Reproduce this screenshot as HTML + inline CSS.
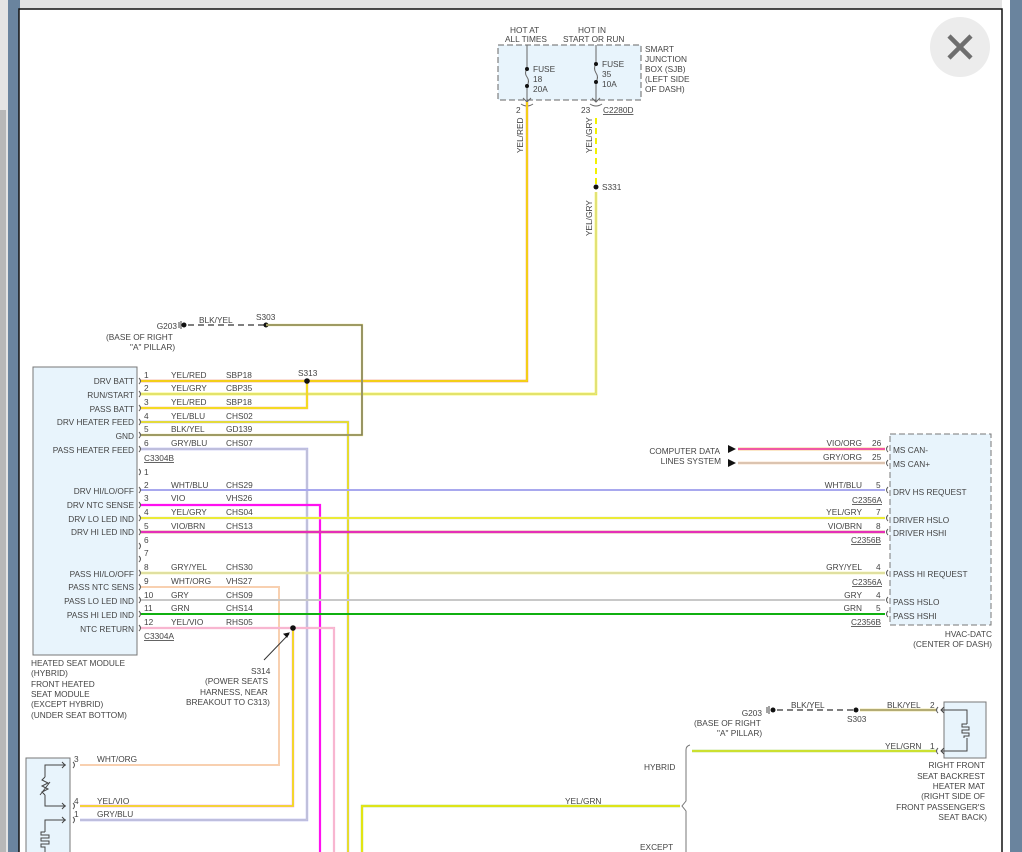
<!DOCTYPE html>
<html><head><meta charset="utf-8"><style>
html,body{margin:0;padding:0;width:1022px;height:852px;overflow:hidden;background:#fff}
svg{display:block}
text{font-family:"Liberation Sans",sans-serif;font-size:8.3px;fill:#444}
.r{text-anchor:end}
.u{text-decoration:underline}
</style></head><body>
<svg width="1022" height="852" viewBox="0 0 1022 852" xmlns="http://www.w3.org/2000/svg">
<rect x="0" y="0" width="1022" height="852" fill="#e4e4e4"/>
<rect x="0" y="110" width="6" height="742" fill="#b8b8b8"/>
<rect x="8" y="0" width="12" height="852" fill="#6a849e"/>
<rect x="1002" y="0" width="8" height="852" fill="#fff"/>
<rect x="1010" y="0" width="12" height="852" fill="#6a849e"/>
<rect x="19" y="9" width="983" height="850" fill="#fff" stroke="#111" stroke-width="1.5"/>
<circle cx="960" cy="47" r="30" fill="#ececec"/>
<path d="M949 36 L971 58 M971 36 L949 58" stroke="#6e6e6e" stroke-width="4.5"/>

<rect x="498" y="45" width="143" height="55" fill="#e8f4fc" stroke="#666" stroke-dasharray="6,3"/>
<text x="510" y="33">HOT AT</text><text x="505" y="42">ALL TIMES</text>
<text x="578" y="33">HOT IN</text><text x="563" y="42">START OR RUN</text>
<text x="645" y="52">SMART</text><text x="645" y="62">JUNCTION</text><text x="645" y="72">BOX (SJB)</text><text x="645" y="82">(LEFT SIDE</text><text x="645" y="92">OF DASH)</text>
<path d="M527 45V69 M527 86V102 M596 45V64 M596 82V102" stroke="#666"/>
<path d="M527 69q-3 4 0 8q3 4 0 9 M596 64q-3 4 0 9q3 4 0 9" stroke="#666" fill="none"/>
<circle cx="527" cy="69" r="2" fill="#111"/><circle cx="527" cy="86" r="2" fill="#111"/>
<circle cx="596" cy="64" r="2" fill="#111"/><circle cx="596" cy="82" r="2" fill="#111"/>
<text x="533" y="72">FUSE</text><text x="533" y="82">18</text><text x="533" y="92">20A</text>
<text x="602" y="67">FUSE</text><text x="602" y="77">35</text><text x="602" y="87">10A</text>
<path d="M523 98l4 4 4-4 M592 98l4 4 4-4 M521 104q6 4 12 0 M590 104q6 4 12 0" stroke="#666" fill="none"/>
<text x="516" y="113">2</text><text x="581" y="113">23</text><text x="603" y="113" class="u">C2280D</text>
<text transform="translate(523,153) rotate(-90)">YEL/RED</text>
<text transform="translate(592,153) rotate(-90)">YEL/GRY</text>
<text transform="translate(592,236) rotate(-90)">YEL/GRY</text>
<circle cx="596" cy="187" r="2.5" fill="#111"/><text x="602" y="190">S331</text>

<rect x="33" y="367" width="104" height="288" fill="#e8f4fc" stroke="#777"/>
<text class="r" x="134" y="384">DRV BATT</text>
<text class="r" x="134" y="398">RUN/START</text>
<text class="r" x="134" y="412">PASS BATT</text>
<text class="r" x="134" y="425">DRV HEATER FEED</text>
<text class="r" x="134" y="439">GND</text>
<text class="r" x="134" y="453">PASS HEATER FEED</text>
<text class="r" x="134" y="494">DRV HI/LO/OFF</text>
<text class="r" x="134" y="508">DRV NTC SENSE</text>
<text class="r" x="134" y="522">DRV LO LED IND</text>
<text class="r" x="134" y="535">DRV HI LED IND</text>
<text class="r" x="134" y="577">PASS HI/LO/OFF</text>
<text class="r" x="134" y="590">PASS NTC SENS</text>
<text class="r" x="134" y="604">PASS LO LED IND</text>
<text class="r" x="134" y="618">PASS HI LED IND</text>
<text class="r" x="134" y="632">NTC RETURN</text>
<text x="31" y="666">HEATED SEAT MODULE</text><text x="31" y="676">(HYBRID)</text><text x="31" y="687">FRONT HEATED</text><text x="31" y="697">SEAT MODULE</text><text x="31" y="707">(EXCEPT HYBRID)</text><text x="31" y="718">(UNDER SEAT BOTTOM)</text>

<text x="144" y="378">1</text><text x="171" y="378">YEL/RED</text><text x="226" y="378">SBP18</text>
<text x="144" y="391">2</text><text x="171" y="391">YEL/GRY</text><text x="226" y="391">CBP35</text>
<text x="144" y="405">3</text><text x="171" y="405">YEL/RED</text><text x="226" y="405">SBP18</text>
<text x="144" y="419">4</text><text x="171" y="419">YEL/BLU</text><text x="226" y="419">CHS02</text>
<text x="144" y="432">5</text><text x="171" y="432">BLK/YEL</text><text x="226" y="432">GD139</text>
<text x="144" y="446">6</text><text x="171" y="446">GRY/BLU</text><text x="226" y="446">CHS07</text>
<text x="144" y="461" class="u">C3304B</text>
<text x="144" y="475">1</text>
<text x="144" y="488">2</text><text x="171" y="488">WHT/BLU</text><text x="226" y="488">CHS29</text>
<text x="144" y="501">3</text><text x="171" y="501">VIO</text><text x="226" y="501">VHS26</text>
<text x="144" y="515">4</text><text x="171" y="515">YEL/GRY</text><text x="226" y="515">CHS04</text>
<text x="144" y="529">5</text><text x="171" y="529">VIO/BRN</text><text x="226" y="529">CHS13</text>
<text x="144" y="543">6</text>
<text x="144" y="556">7</text>
<text x="144" y="570">8</text><text x="171" y="570">GRY/YEL</text><text x="226" y="570">CHS30</text>
<text x="144" y="584">9</text><text x="171" y="584">WHT/ORG</text><text x="226" y="584">VHS27</text>
<text x="144" y="598">10</text><text x="171" y="598">GRY</text><text x="226" y="598">CHS09</text>
<text x="144" y="611">11</text><text x="171" y="611">GRN</text><text x="226" y="611">CHS14</text>
<text x="144" y="625">12</text><text x="171" y="625">YEL/VIO</text><text x="226" y="625">RHS05</text>
<text x="144" y="639" class="u">C3304A</text>
<path d="M139 378q3 3 0 6M139 391q3 3 0 6M139 405q3 3 0 6M139 419q3 3 0 6M139 432q3 3 0 6M139 446q3 3 0 6M139 469q3 3 0 6M139 487q3 3 0 6M139 502q3 3 0 6M139 515q3 3 0 6M139 529q3 3 0 6M139 543q3 3 0 6M139 556q3 3 0 6M139 570q3 3 0 6M139 584q3 3 0 6M139 597q3 3 0 6M139 611q3 3 0 6M139 625q3 3 0 6" stroke="#555" fill="none"/>

<text class="r" x="177" y="329">G203</text>
<path d="M179 322v6M181 321v8" stroke="#444"/><circle cx="184" cy="325" r="2.5" fill="#111"/>
<path d="M188 325H266" stroke="#555" stroke-width="1.5" stroke-dasharray="6,4"/>
<text x="199" y="323">BLK/YEL</text><text x="256" y="320">S303</text>
<circle cx="266" cy="325" r="2.5" fill="#111"/>
<text x="106" y="340">(BASE OF RIGHT</text><text x="130" y="350">"A" PILLAR)</text>
<text x="298" y="376">S313</text>

<g fill="none">
<path d="M141 381H527V102" stroke="#f08060" stroke-width="2.4"/><path d="M141 381H527V102" stroke="#f4e800" stroke-width="1.5"/>
<path d="M141 394H596V192" stroke="#f2f200" stroke-width="2.4"/><path d="M141 394H596V192" stroke="#d4d4d4" stroke-width="1.1"/>
<path d="M596 118V184" stroke="#f2f200" stroke-width="2" stroke-dasharray="6,4"/>
<path d="M141 408H307V381" stroke="#f6b090" stroke-width="2.4"/><path d="M141 408H307V381" stroke="#f4e800" stroke-width="1.5"/>
<path d="M141 422H348V852" stroke="#b0b0ee" stroke-width="2.4"/><path d="M141 422H348V852" stroke="#f4e800" stroke-width="1.6"/>
<path d="M141 435H362V325H266" stroke="#d8d060" stroke-width="2.2"/><path d="M141 435H362V325H266" stroke="#666" stroke-width="1.1"/>
<path d="M141 449H307V820H80" stroke="#b0b0f0" stroke-width="2.4"/><path d="M141 449H307V820H80" stroke="#cccccc" stroke-width="1.1"/>
<path d="M141 490H885" stroke="#a8a8ee" stroke-width="2"/>
<path d="M141 505H320V852" stroke="#ff10f0" stroke-width="2.2"/>
<path d="M141 518H885" stroke="#dcdcdc" stroke-width="2.4"/><path d="M141 518H885" stroke="#f0f000" stroke-width="1.6"/>
<path d="M141 532H885" stroke="#c06040" stroke-width="2.4"/><path d="M141 532H885" stroke="#f020e0" stroke-width="1.5"/>
<path d="M141 573H885" stroke="#f0f080" stroke-width="2.4"/><path d="M141 573H885" stroke="#d0d0c0" stroke-width="1"/>
<path d="M141 587H279V765H80" stroke="#f8d0b0" stroke-width="2"/>
<path d="M141 600H885" stroke="#c8c8c8" stroke-width="2"/>
<path d="M141 614H885" stroke="#10b010" stroke-width="2"/>
<path d="M141 628H334V852" stroke="#f8a8c8" stroke-width="2.2"/><path d="M141 628H334V852" stroke="#f8c4d8" stroke-width="1"/>
<path d="M293 628V806H80" stroke="#f090e8" stroke-width="2.4"/><path d="M293 628V806H80" stroke="#f4e800" stroke-width="1.6"/>
<path d="M738 449H885" stroke="#f0a020" stroke-width="2.4"/><path d="M738 449H885" stroke="#f040d0" stroke-width="1.6"/>
<path d="M738 463H885" stroke="#f8c8a0" stroke-width="2.4"/><path d="M738 463H885" stroke="#c0c0c0" stroke-width="1"/>
<path d="M362 852V806H680" stroke="#a8d860" stroke-width="2.4"/><path d="M362 852V806H680" stroke="#f0e800" stroke-width="1.6"/>
<path d="M692 751H936" stroke="#a8d860" stroke-width="2.4"/><path d="M692 751H936" stroke="#f0e800" stroke-width="1"/>
<path d="M860 710H936" stroke="#e0d060" stroke-width="2.4"/><path d="M860 710H936" stroke="#888" stroke-width="1"/>
</g>
<circle cx="307" cy="381" r="2.8" fill="#111"/>
<circle cx="293" cy="628" r="2.8" fill="#111"/>
<path d="M264 660L289 634" stroke="#333"/><path d="M289 633l-5 1 3 3z" fill="#111" stroke="#111"/>
<text x="251" y="674">S314</text><text x="205" y="684">(POWER SEATS</text><text x="200" y="695">HARNESS, NEAR</text><text x="186" y="705">BREAKOUT TO C313)</text>

<rect x="890" y="434" width="101" height="191" fill="#e8f4fc" stroke="#777" stroke-dasharray="6,3"/>
<path d="M736 449l-8-4v8z M736 463l-8-4v8z" fill="#111"/>
<text class="r" x="720" y="454">COMPUTER DATA</text><text class="r" x="721" y="464">LINES SYSTEM</text>
<text class="r" x="862" y="446">VIO/ORG</text><text x="872" y="446">26</text>
<text class="r" x="862" y="460">GRY/ORG</text><text x="872" y="460">25</text>
<text class="r" x="862" y="488">WHT/BLU</text><text x="876" y="488">5</text><text x="852" y="503" class="u">C2356A</text>
<text class="r" x="862" y="515">YEL/GRY</text><text x="876" y="515">7</text>
<text class="r" x="862" y="529">VIO/BRN</text><text x="876" y="529">8</text><text x="851" y="543" class="u">C2356B</text>
<text class="r" x="862" y="570">GRY/YEL</text><text x="876" y="570">4</text><text x="852" y="585" class="u">C2356A</text>
<text class="r" x="862" y="598">GRY</text><text x="876" y="598">4</text>
<text class="r" x="862" y="611">GRN</text><text x="876" y="611">5</text><text x="851" y="625" class="u">C2356B</text>
<path d="M888 446q-3 3 0 6M888 460q-3 3 0 6M888 487q-3 3 0 6M888 515q-3 3 0 6M888 529q-3 3 0 6M888 570q-3 3 0 6M888 597q-3 3 0 6M888 611q-3 3 0 6" stroke="#555" fill="none"/>
<text x="893" y="453">MS CAN-</text><text x="893" y="467">MS CAN+</text>
<text x="893" y="495">DRV HS REQUEST</text>
<text x="893" y="523">DRIVER HSLO</text><text x="893" y="536">DRIVER HSHI</text>
<text x="893" y="577">PASS HI REQUEST</text>
<text x="893" y="605">PASS HSLO</text><text x="893" y="619">PASS HSHI</text>
<text class="r" x="992" y="637">HVAC-DATC</text><text class="r" x="992" y="647">(CENTER OF DASH)</text>

<text class="r" x="762" y="716">G203</text>
<path d="M767 707v6M769 706v8" stroke="#444"/><circle cx="773" cy="710" r="2.5" fill="#111"/>
<path d="M777 710H856" stroke="#555" stroke-width="1.5" stroke-dasharray="6,4"/>
<circle cx="856" cy="710" r="2.5" fill="#111"/>
<text x="791" y="708">BLK/YEL</text><text x="847" y="722">S303</text>
<text x="694" y="726">(BASE OF RIGHT</text><text x="717" y="736">"A" PILLAR)</text>
<text x="887" y="708">BLK/YEL</text><text x="930" y="708">2</text>
<text x="885" y="749">YEL/GRN</text><text x="930" y="749">1</text>
<rect x="944" y="702" width="42" height="56" fill="#e8f4fc" stroke="#777"/>
<path d="M938 707q-3 3 0 6M938 748q-3 3 0 6" stroke="#555" fill="none"/>
<path d="M941 710h26v14M967 738v13h-26 M944 707l-3 3 3 3M944 748l-3 3 3 3" stroke="#444" fill="none"/>
<path d="M967 724h-5v3h7v3h-7v3h7v3h-5v2" stroke="#444" fill="none"/>
<text class="r" x="985" y="768">RIGHT FRONT</text><text class="r" x="985" y="779">SEAT BACKREST</text><text class="r" x="985" y="789">HEATER MAT</text><text class="r" x="985" y="799">(RIGHT SIDE OF</text><text class="r" x="985" y="810">FRONT PASSENGER'S</text><text class="r" x="987" y="820">SEAT BACK)</text>
<path d="M690 745q-4 1-4 5V801l-4 5 4 5V852" stroke="#777" fill="none"/>
<text x="644" y="770">HYBRID</text><text x="640" y="850">EXCEPT</text>
<text x="565" y="804">YEL/GRN</text>

<rect x="26" y="758" width="44" height="100" fill="#e8f4fc" stroke="#777"/>
<text x="74" y="762">3</text><text x="97" y="762">WHT/ORG</text>
<text x="74" y="804">4</text><text x="97" y="804">YEL/VIO</text>
<text x="74" y="817">1</text><text x="97" y="817">GRY/BLU</text>
<path d="M73 762q3 3 0 6M73 803q3 3 0 6M73 817q3 3 0 6" stroke="#555" fill="none"/>
<path d="M66 765H45v12 M45 795v11h21 M66 820H45v12 M62 762l3 3-3 3M62 803l3 3-3 3M62 817l3 3-3 3" stroke="#444" fill="none"/>
<path d="M45 777l-3 3 6 3-6 3 6 3-6 3 3 3 M40 795l10-13" stroke="#444" fill="none"/>
<path d="M45 832h-4v3h8v3h-8v3h8v3h-8v3h4v6" stroke="#444" fill="none"/>
</svg>
</body></html>
